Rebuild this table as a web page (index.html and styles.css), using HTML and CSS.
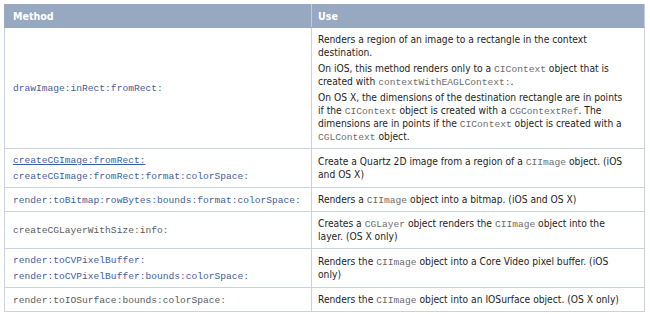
FILE: index.html
```html
<!DOCTYPE html>
<html>
<head>
<meta charset="utf-8">
<link rel="stylesheet" href="styles.css">
</head>
<body>
<table class="api">
  <thead>
    <tr><th class="col-method">Method</th><th class="col-use">Use</th></tr>
  </thead>
  <tbody>
    <tr>
      <td class="method"><p><span class="code link">drawImage:inRect:fromRect:</span></p></td>
      <td class="use">
        <p>Renders a region of an image to a rectangle in the context destination.</p>
        <p>On iOS, this method renders only to a <span class="code">CIContext</span> object that is created with <span class="code">contextWithEAGLContext:</span>.</p>
        <p>On OS X, the dimensions of the destination rectangle are in points if the <span class="code">CIContext</span> object is created with a <span class="code">CGContextRef</span>. The dimensions are in points if the <span class="code">CIContext</span> object is created with a <span class="code">CGLContext</span> object.</p>
      </td>
    </tr>
    <tr>
      <td class="method">
        <p><span class="code link under">createCGImage:fromRect:</span></p>
        <p><span class="code link">createCGImage:fromRect:format:colorSpace:</span></p>
      </td>
      <td class="use"><p>Create a Quartz 2D image from a region of a <span class="code">CIImage</span> object. (iOS and OS X)</p></td>
    </tr>
    <tr>
      <td class="method"><p><span class="code link">render:toBitmap:rowBytes:bounds:format:colorSpace:</span></p></td>
      <td class="use"><p>Renders a <span class="code">CIImage</span> object into a bitmap. (iOS and OS X)</p></td>
    </tr>
    <tr>
      <td class="method"><p><span class="code plain">createCGLayerWithSize:info:</span></p></td>
      <td class="use"><p>Creates a <span class="code">CGLayer</span> object renders the <span class="code">CIImage</span> object into the layer. (OS X only)</p></td>
    </tr>
    <tr>
      <td class="method">
        <p><span class="code link">render:toCVPixelBuffer:</span></p>
        <p><span class="code link">render:toCVPixelBuffer:bounds:colorSpace:</span></p>
      </td>
      <td class="use"><p>Renders the <span class="code">CIImage</span> object into a Core Video pixel buffer. (iOS only)</p></td>
    </tr>
    <tr>
      <td class="method"><p><span class="code plain">render:toIOSurface:bounds:colorSpace:</span></p></td>
      <td class="use"><p>Renders the <span class="code">CIImage</span> object into an IOSurface object. (OS X only)</p></td>
    </tr>
  </tbody>
</table>
</body>
</html>
```
FILE: styles.css
```css
html, body {
  margin: 0;
  padding: 0;
  background: #ffffff;
}
body {
  padding: 4px 5px 0 4px;
  font-family: "DejaVu Sans Condensed", "Liberation Sans", sans-serif;
  font-size: 10.2px;
  color: #1e1e1e;
}
.api {
  width: 641px;
  border-collapse: collapse;
  table-layout: fixed;
}
.api th {
  background: #97a8c0;
  color: #ffffff;
  font-weight: bold;
  text-align: left;
  font-size: 10.6px;
  height: 22px;
  padding: 0 8px;
  border: 1px solid #97a8c0;
  border-right-color: #c3ccd8;
}
.api th.col-use { padding-left: 6px; }
.col-method { width: 290px; }
.api td {
  border: 1px solid #c9d2de;
  vertical-align: middle;
  padding: 5px 16px 5px 6px;
  line-height: 13px;
}
.api td.method { padding-left: 8px; padding-right: 6px; }
.api td p {
  margin: 0;
}
.api td.use p + p {
  margin-top: 3px;
}
.api td.method p {
  line-height: 12px;
}
.api td.method p + p {
  margin-top: 4px;
}
.code {
  font-family: "Liberation Mono", "DejaVu Sans Mono", monospace;
  font-size: 9.6px;
  line-height: 1;
  color: #6d6d6d;
}
.method .code {
  color: #5c5c5c;
}
.method .code.link {
  color: #3e5f9e;
}
.under {
  text-decoration: underline;
}
```
